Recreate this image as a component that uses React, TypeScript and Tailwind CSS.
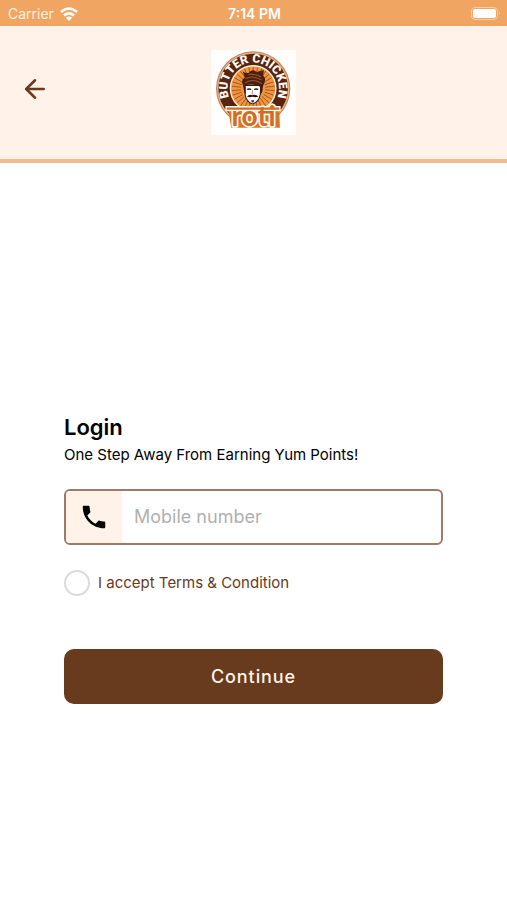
import { useState } from 'react';
import { ArrowLeft } from 'lucide-react';
import { MdPhone } from 'react-icons/md';

const rays = Array.from({ length: 30 }, (_, i) => i * 12);

function Logo() {
  return (
    <svg viewBox="0 0 254 254" className="size-[85px]" role="img" aria-label="Butter Chicken Roti">
      <rect width="254" height="254" fill="#fffefd" />
      <circle cx="126" cy="115" r="111" fill="#b98263" />
      <circle cx="126" cy="115" r="108" fill="#efb07a" />
      <circle cx="126" cy="115" r="104" fill="#562411" />
      <circle cx="126" cy="115" r="70" fill="#fff3e4" />
      <circle cx="126" cy="115" r="66" fill="#f0953f" />
      <g stroke="#9a5220" strokeWidth="2.5">
        {rays.map((a) => (
          <line key={a} x1="126" y1="79" x2="126" y2="51" transform={`rotate(${a} 126 115)`} />
        ))}
      </g>
      <path id="ring" d="M 63 159 A 77 77 0 1 1 189 159" fill="none" />
      <text fill="#fff8f0" fontFamily="Roboto, sans-serif" fontWeight="900" fontSize="36">
        <textPath href="#ring" startOffset="50%" textAnchor="middle">BUTTER CHICKEN</textPath>
      </text>

      {/* Face and turban */}
      <path d="M102 106 L102 134 Q106 156 124 161 Q142 156 147 134 L149 106 Z" fill="#fff" stroke="#35190f" strokeWidth="3" />
      <path d="M98 110 Q86 90 101 82 L95 64 Q107 72 114 67 Q124 55 136 66 L158 60 L156 76 Q166 86 158 103 L149 111 Q125 98 102 107 Z" fill="#4a2010" />
      <path d="M103 86 Q122 74 152 90 M101 99 Q123 82 152 101 M112 73 Q132 71 149 80" fill="none" stroke="#a3562e" strokeWidth="3" />
      <path d="M147 104 L156 103 L153 126 L147 134 Z M102 106 L96 109 L100 128 L104 134 Z" fill="#3c1b10" />
      <path d="M108 118 Q114 115 120 118 M129 118 Q135 115 141 118" fill="none" stroke="#25110b" strokeWidth="4" />
      <path d="M124 119 L123 131 L127 132" fill="none" stroke="#8d604b" strokeWidth="2" />
      <path d="M107 139 Q115 131 124 135 Q133 131 142 139 Q134 143 124 140 Q115 143 107 139 Z" fill="#25110b" />
      <path d="M120 149 Q124 152 129 149 L127 157 H122 Z" fill="#4a2414" />

      {/* Lower banner */}
      <path d="M52 180 H204 L206 232 H60 Z" fill="#d97527" />
      <path d="M43 175 H208" stroke="#fff8ef" strokeWidth="16" />
      <text
        x="127"
        y="226"
        textAnchor="middle"
        fontFamily="Lato, sans-serif"
        fontWeight="700"
        fontSize="84"
        fill="#cf6d24"
        stroke="#fff8ef"
        strokeWidth="10"
        strokeLinejoin="round"
        paintOrder="stroke"
      >
        roti
      </text>
      <path d="M47 175 H204" stroke="#cf6d24" strokeWidth="7" />
    </svg>
  );
}

function StatusBar() {
  return (
    <div className="grid h-[26px] grid-cols-3 items-center bg-[#f0a562] pt-0.5 pr-1.5 pl-2 text-sm leading-none text-white">
      <div className="flex items-center gap-1.5">
        <span className="text-[#fff0e0]">Carrier</span>
        <svg viewBox="0 0 18 14" className="h-3.5 w-[18px]" fill="none" stroke="white" strokeWidth="2.6" aria-hidden="true">
          <path d="M1 5 Q9 -2 17 5" />
          <path d="M4 8.4 Q9 4.2 14 8.4" />
          <path d="M9 14 L5.8 10.8 Q9 8.4 12.2 10.8 Z" fill="white" stroke="none" />
        </svg>
      </div>
      <span className="text-center font-semibold">7:14 PM</span>
      <svg viewBox="0 0 30 14" className="h-3.5 w-[30px] justify-self-end" aria-hidden="true">
        <rect x="0.5" y="0.5" width="26" height="12" rx="3.5" fill="none" stroke="#f8cda4" />
        <rect x="2" y="2" width="23" height="9" rx="2" fill="white" />
        <path d="M28 5 Q30 6.5 28 8 Z" fill="#f8cda4" />
      </svg>
    </div>
  );
}

export default function App() {
  const [mobile, setMobile] = useState('');
  const [accepted, setAccepted] = useState(false);

  return (
    <div className="min-h-screen bg-white font-['Inter',sans-serif] text-black">
      <StatusBar />

      {/* Header */}
      <header className="grid grid-cols-[1fr_auto_1fr] items-center border-b-4 border-[#f0bc8e] bg-[#fff3e9] px-5 pt-6 pb-6">
        <button type="button" aria-label="Back" className="justify-self-start pb-2 text-[#683a1e]">
          <ArrowLeft size={30} strokeWidth={2} />
        </button>
        <Logo />
      </header>

      {/* Login form */}
      <main className="px-16 pt-[250px] pb-12">
        <form onSubmit={(e) => e.preventDefault()}>
          <h1 className="text-[22px] leading-7 font-semibold">Login</h1>
          <p className="text-[15px] leading-7">One Step Away From Earning Yum Points!</p>

          <div className="mt-5 flex h-14 overflow-hidden rounded-md border-2 border-[#a07a68]">
            <label htmlFor="mobile" aria-label="Mobile number" className="flex w-14 items-center justify-center bg-[#fff3e9]">
              <MdPhone size={30} />
            </label>
            <input
              id="mobile"
              type="tel"
              value={mobile}
              onChange={(e) => setMobile(e.target.value)}
              placeholder="Mobile number"
              className="min-w-0 flex-1 px-3 text-lg outline-none placeholder:text-[#b0b0b0]"
            />
          </div>

          <div className="mt-6 flex items-center gap-2">
            <input
              id="terms"
              type="checkbox"
              checked={accepted}
              onChange={(e) => setAccepted(e.target.checked)}
              className="size-[26px] appearance-none rounded-full border-2 border-[#dadada] checked:bg-[#683a1e]"
            />
            <label htmlFor="terms" className="text-[15px] leading-7 text-[#683a1e]">
              I accept Terms &amp; Condition
            </label>
          </div>

          <button type="submit" className="mt-13 h-[55px] w-full rounded-[10px] bg-[#683a1e] text-lg font-medium tracking-wider text-[#fff3e9]">
            Continue
          </button>
        </form>
      </main>
    </div>
  );
}
